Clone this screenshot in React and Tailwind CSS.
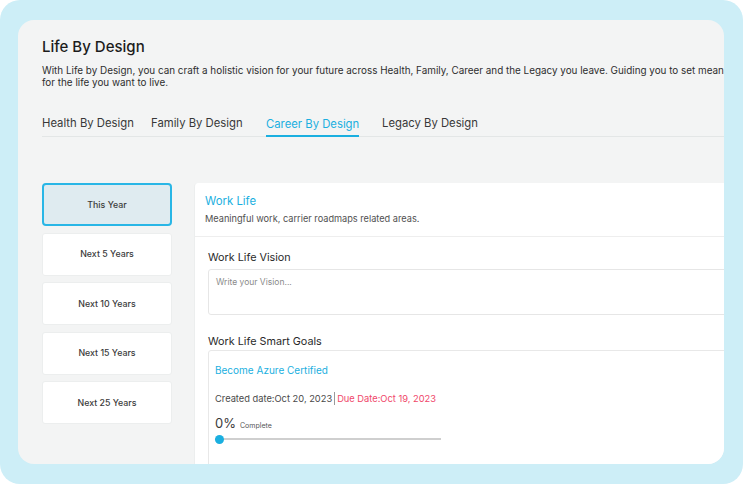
import React from "react";

const years = ["This Year", "Next 5 Years", "Next 10 Years", "Next 15 Years", "Next 25 Years"];

export default function App() {
  return (
    <div className="w-[743px] h-[484px] bg-white" style={{ fontFamily: "Inter, 'Noto Sans', sans-serif" }}>
      <div className="w-full h-full rounded-[20px] bg-[#cdeef7] pt-[20px] pb-[20px] pl-[18px] pr-[19px]">
        <div className="w-full h-full rounded-[16px] bg-[#f3f4f4] overflow-hidden pl-[24px] pt-[17px]">
          <div className="w-[760px]">
            <h1 className="text-[15px] leading-[20px] font-medium text-[#1c1c1c]">Life By Design</h1>
            <p className="mt-[7px] text-[9.9px] leading-[12px] text-[#2e2e2e] whitespace-nowrap">
              With Life by Design, you can craft a holistic vision for your future across Health, Family, Career and the Legacy you leave. Guiding you to set meaningful goals
              <br />
              for the life you want to live.
            </p>
            <div className="mt-[27px] flex items-end border-b border-[#e3e6e6] w-[682px] text-[11.3px] leading-[16px]">
              <div className="w-[109px] pb-[5px] text-[#383838]">Health By Design</div>
              <div className="w-[115px] pb-[5px] text-[#383838]">Family By Design</div>
              <div className="w-[116px] flex">
                <div className="pb-[3px] border-b-2 border-[#1aafe0] mb-[-1px] text-[#1aafe0]">Career By Design</div>
              </div>
              <div className="pb-[5px] text-[#383838]">Legacy By Design</div>
            </div>

            <div className="mt-[46px] flex gap-[22px]">
              <div className="w-[130px] shrink-0 flex flex-col gap-[6.5px]">
                {years.map((y, i) =>
                  i === 0 ? (
                    <div key={y} className="h-[43px] rounded-[4px] border-2 border-[#29b6e6] bg-[#dfebf0] flex items-center justify-center text-[8.8px] font-medium text-[#3a3a3a]">
                      {y}
                    </div>
                  ) : (
                    <div key={y} className="h-[43px] rounded-[3px] border border-[#eceeee] bg-white flex items-center justify-center text-[8.8px] font-medium text-[#3a3a3a]">
                      {y}
                    </div>
                  )
                )}
              </div>

              <div className="w-[560px] shrink-0 h-[300px] bg-white rounded-tl-[4px] border-l border-[#eceeee]">
                <div className="pl-[10px] pt-[10px] pb-[11.5px] border-b border-[#eeeeee]">
                  <div className="text-[11.4px] leading-[16px] text-[#1aafe0]">Work Life</div>
                  <div className="mt-[2.5px] text-[9.2px] leading-[13px] text-[#505050]">Meaningful work, carrier roadmaps related areas.</div>
                </div>
                <div className="pl-[13px] pt-[12.5px]">
                  <div className="text-[10.8px] leading-[15px] text-[#2a2a2a]">Work Life Vision</div>
                  <div className="mt-[4.5px] h-[46px] rounded-[3px] border border-[#e6e6e6] px-[7px] pt-[6px] text-[8.5px] leading-[12px] text-[#8a8a8a]">
                    Write your Vision...
                  </div>
                  <div className="mt-[18.5px] text-[10.8px] leading-[15px] text-[#2a2a2a]">Work Life Smart Goals</div>
                  <div className="mt-[1.5px] h-[120px] rounded-[3px] border border-[#e8e8e8] px-[6px] pt-[12px]">
                    <div className="text-[10px] leading-[14px] text-[#1aafe0]">Become Azure Certified</div>
                    <div className="mt-[14.5px] flex items-center text-[9.3px] leading-[13px] whitespace-nowrap">
                      <span className="text-[#4a4a4a]">Created date:Oct 20, 2023</span>
                      <span className="mx-[2px] inline-block w-px h-[13px] bg-[#9a9a9a]"></span>
                      <span className="text-[#f0476a]">Due Date:Oct 19, 2023</span>
                    </div>
                    <div className="mt-[10.5px] flex items-baseline gap-[4px]">
                      <span className="text-[13px] leading-[16px] text-[#3a3a3a]">0%</span>
                      <span className="text-[7px] leading-[10px] text-[#555]">Complete</span>
                    </div>
                    <div className="relative mt-[3px] h-[10px] w-[226px] flex items-center">
                      <div className="w-full h-[2px] bg-[#cfcfcf]"></div>
                      <div className="absolute left-0 top-[0.5px] w-[9px] h-[9px] rounded-full bg-[#1aafe0]"></div>
                    </div>
                  </div>
                </div>
              </div>
            </div>
          </div>
        </div>
      </div>
    </div>
  );
}
